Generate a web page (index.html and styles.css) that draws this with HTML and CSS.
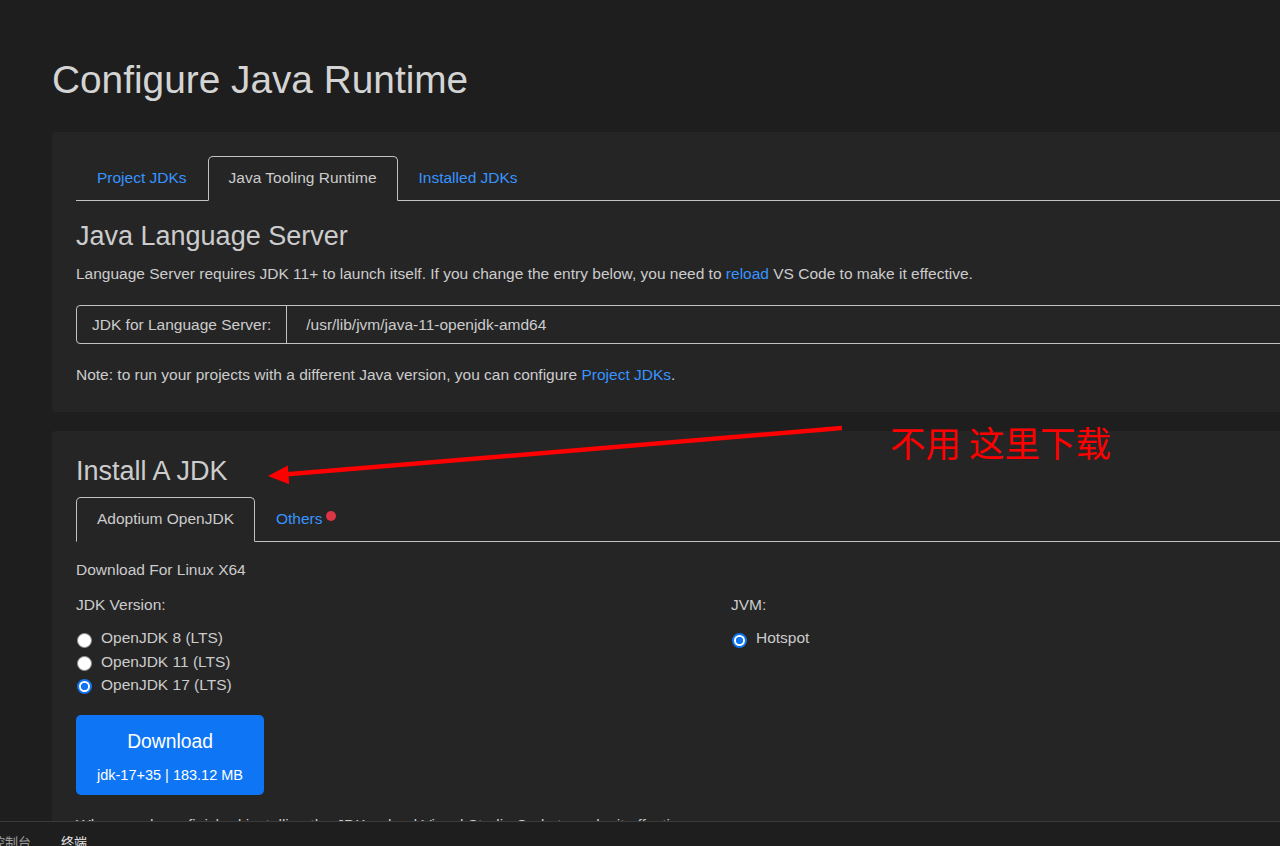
FILE: index.html
```html
<!DOCTYPE html>
<html lang="en">
<head>
<meta charset="utf-8">
<title>Configure Java Runtime</title>
<link rel="stylesheet" href="styles.css">
</head>
<body>
<main class="page">
  <h1 class="title">Configure Java Runtime</h1>

  <section class="card card-runtime">
    <nav class="tabs tabs-runtime">
      <a class="tab" href="#">Project JDKs</a>
      <a class="tab active" href="#">Java Tooling Runtime</a>
      <a class="tab" href="#">Installed JDKs</a>
    </nav>
    <h3 class="card-heading">Java Language Server</h3>
    <p class="desc">Language Server requires JDK 11+ to launch itself. If you change the entry below, you need to <a class="link" href="#">reload</a> VS Code to make it effective.</p>
    <div class="input-group">
      <span class="input-label">JDK for Language Server:</span>
      <span class="input-value">/usr/lib/jvm/java-11-openjdk-amd64</span>
    </div>
    <p class="note">Note: to run your projects with a different Java version, you can configure <a class="link" href="#">Project JDKs</a>.</p>
  </section>

  <section class="card card-install">
    <h3 class="card-heading">Install A JDK</h3>
    <nav class="tabs tabs-install">
      <a class="tab active" href="#">Adoptium OpenJDK</a>
      <a class="tab tab-others" href="#">Others<span class="badge-dot"></span></a>
    </nav>
    <p class="platform">Download For Linux X64</p>
    <div class="options">
      <div class="option-col">
        <p class="option-label">JDK Version:</p>
        <ul class="radios">
          <li class="radio-row"><span class="radio"></span><span>OpenJDK 8 (LTS)</span></li>
          <li class="radio-row"><span class="radio"></span><span>OpenJDK 11 (LTS)</span></li>
          <li class="radio-row"><span class="radio checked"></span><span>OpenJDK 17 (LTS)</span></li>
        </ul>
        <button class="download" type="button">
          <span class="dl-title">Download</span>
          <span class="dl-size">jdk-17+35 | 183.12 MB</span>
        </button>
      </div>
      <div class="option-col">
        <p class="option-label">JVM:</p>
        <ul class="radios">
          <li class="radio-row"><span class="radio checked"></span><span>Hotspot</span></li>
        </ul>
      </div>
    </div>
    <p class="hint">When you have finished installing the JDK, reload Visual Studio Code to make it effective.</p>
  </section>
</main>

<footer class="panel">
  <ul class="panel-tabs">
    <li class="panel-tab">调试控制台</li>
    <li class="panel-tab active">终端</li>
  </ul>
</footer>

<svg class="annotation-arrow" width="1280" height="846" viewBox="0 0 1280 846" aria-hidden="true">
  <line x1="842" y1="428" x2="284" y2="474.6" stroke="#ff0000" stroke-width="4.5"/>
  <polygon points="268,476 289.2,484.2 287.8,465.4" fill="#ff0000"/>
</svg>
<div class="annotation-text">不用 这里下载</div>
</body>
</html>
```

FILE: styles.css
```css
* { box-sizing: border-box; }

html, body {
  margin: 0;
  padding: 0;
}

body {
  width: 1280px;
  height: 846px;
  overflow: hidden;
  position: relative;
  display: flex;
  flex-direction: column;
  background: #1e1e1e;
  color: #cccccc;
  font-family: "Liberation Sans", Arial, sans-serif;
  font-size: 15.5px;
  line-height: 23.16px;
}

.page {
  flex: 1;
  min-height: 0;
  overflow: hidden;
  padding: 57px 0 0 52px;
}

.title {
  margin: 0 0 28.7px;
  font-size: 38.8px;
  line-height: 46.3px;
  font-weight: 400;
  color: #d4d4d4;
}

.card {
  width: 1358px;
  background: #252526;
  border-radius: 4px;
  padding: 24px;
}

.card-runtime {
  padding-bottom: 25.5px;
}

.card-install {
  margin-top: 19px;
  padding-bottom: 40px;
}

.card-heading {
  margin: 0 0 9.6px;
  font-size: 27px;
  line-height: 32.4px;
  font-weight: 400;
  color: #cccccc;
}

.tabs {
  display: flex;
  border-bottom: 1px solid #c2c2c2;
}

.tabs-runtime { margin-bottom: 19.5px; }
.tabs-install { margin-bottom: 16.4px; }

.tab {
  display: block;
  position: relative;
  padding: 10.5px 20px;
  line-height: 22px;
  border: 1px solid transparent;
  border-radius: 5px 5px 0 0;
  margin-bottom: -1px;
  color: #3794ff;
  text-decoration: none;
}

.tab.active {
  color: #cccccc;
  background: #252526;
  border-color: #c2c2c2 #c2c2c2 #252526;
}

.tab-others {
  padding-right: 32px;
}

.badge-dot {
  position: absolute;
  top: 13.5px;
  right: 19px;
  width: 10px;
  height: 10px;
  border-radius: 50%;
  background: #dc3545;
}

.link {
  color: #3794ff;
  text-decoration: none;
}

.desc {
  margin: 0 0 19.3px;
}

.input-group {
  display: flex;
  align-items: stretch;
  height: 39px;
  border: 1px solid #c2c2c2;
  border-radius: 4px;
}

.input-label {
  display: flex;
  align-items: center;
  padding: 0 15px;
  border-right: 1px solid #c2c2c2;
}

.input-value {
  display: flex;
  align-items: center;
  padding-left: 19px;
}

.note {
  margin: 19px 0 0;
}

.platform {
  margin: 0 0 12.2px;
}

.options {
  display: grid;
  grid-template-columns: 655px 655px;
}

.option-label {
  margin: 0 0 10px;
}

.radios {
  list-style: none;
  margin: 0;
  padding: 0;
}

.radio-row {
  display: flex;
  align-items: flex-start;
  gap: 9px;
}

.radio {
  flex: none;
  width: 15px;
  height: 15px;
  margin: 6.5px 0 0 1px;
  border-radius: 50%;
  background: #ffffff;
  border: 1px solid #8f8f8f;
}

.radio.checked {
  border: 2px solid #1174f2;
  background: radial-gradient(circle, #1174f2 0 3.4px, #ffffff 3.9px);
}

.download {
  display: flex;
  flex-direction: column;
  align-items: center;
  width: 188px;
  height: 80px;
  margin-top: 19.4px;
  padding: 12.8px 0 0;
  border: none;
  border-radius: 5px;
  background: #0e76f4;
  color: #ffffff;
  font-family: inherit;
}

.dl-title {
  font-size: 19.3px;
  line-height: 28.95px;
}

.dl-size {
  margin-top: 8px;
  font-size: 14.5px;
  line-height: 21.75px;
}

.hint {
  margin: 17.8px 0 0;
}

.panel {
  flex: none;
  height: 25px;
  border-top: 1px solid #3a3a3a;
  background: #1e1e1e;
  overflow: hidden;
}

.panel-tabs {
  display: flex;
  gap: 30px;
  list-style: none;
  margin: 0 0 0 -34px;
  padding: 13px 0 0;
  font-family: "Noto Sans CJK SC", "Noto Sans", sans-serif;
  font-size: 13px;
  line-height: 13px;
}

.panel-tab {
  color: #9d9d9d;
}

.panel-tab.active {
  color: #e7e7e7;
}

.annotation-arrow {
  position: absolute;
  left: 0;
  top: 0;
  pointer-events: none;
}

.annotation-text {
  position: absolute;
  left: 890px;
  top: 424px;
  font-family: "Noto Sans CJK SC", sans-serif;
  font-size: 35.5px;
  line-height: 35.5px;
  color: #ff0000;
  white-space: pre;
}
```
